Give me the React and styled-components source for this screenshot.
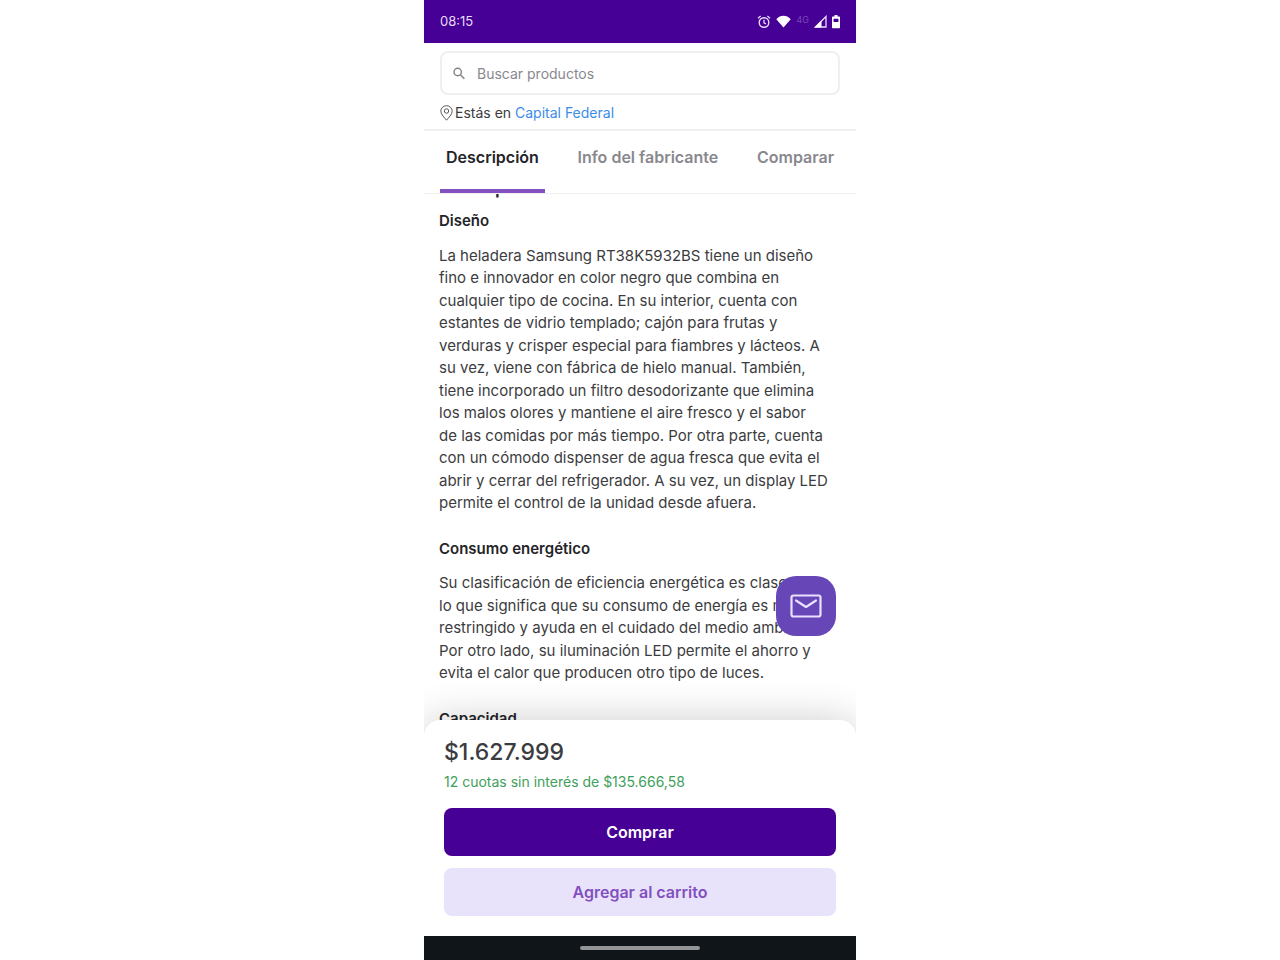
import React, { useState } from "react";
import styled, { createGlobalStyle } from "styled-components";

const colors = {
  brand: "#460096",
  accent: "#8250c0",
  fab: "#6747b8",
  lilac: "#e8e3fb",
  black: "#242428",
  text: "#3c3c40",
  gray: "#88888e",
  line: "#efeff0",
  link: "#3d8bea",
  green: "#3fa05c",
  navBar: "#0f1518",
};

const GlobalStyle = createGlobalStyle`
  * {
    box-sizing: border-box;
  }
  body {
    margin: 0;
    background-color: white;
    font-family: Inter, "Liberation Sans", sans-serif;
    color: ${colors.text};
  }
  h1, h2, p {
    margin: 0;
  }
  button, input {
    font-family: inherit;
  }
`;

const Screen = styled.div`
  position: relative;
  display: flex;
  flex-direction: column;
  width: 100%;
  max-width: 432px;
  height: 100vh;
  margin: 0 auto;
  overflow: hidden;
`;

const StatusBar = styled.div`
  display: flex;
  flex: none;
  align-items: center;
  justify-content: space-between;
  padding: 12px 16px;
  background-color: ${colors.brand};
  color: #e6dcf5;
  font-size: 13px;
  line-height: 19px;
`;

const StatusIcons = styled.div`
  display: flex;
  align-items: center;
  gap: 5px;
  svg {
    display: block;
  }
`;

const Network = styled.span`
  align-self: flex-start;
  color: #7a48b8;
  font-size: 9px;
  line-height: 10px;
`;

const Header = styled.header`
  flex: none;
  padding: 8px 16px 6px;
  border-bottom: 2px solid ${colors.line};
`;

const SearchBox = styled.label`
  display: flex;
  align-items: center;
  gap: 12px;
  height: 44px;
  padding: 0 11px;
  border: 2px solid ${colors.line};
  border-radius: 8px;
  input {
    flex: 1;
    min-width: 0;
    padding: 0;
    border: 0;
    outline: 0;
    background: none;
    color: ${colors.text};
    font-size: 14px;
  }
  input::placeholder {
    color: ${colors.gray};
    opacity: 1;
  }
`;

const Location = styled.p`
  display: flex;
  align-items: center;
  gap: 2px;
  padding-top: 8px;
  color: ${colors.text};
  font-size: 14px;
  line-height: 20px;
  a {
    color: ${colors.link};
    text-decoration: none;
  }
`;

const Tabs = styled.div`
  display: flex;
  flex: none;
  justify-content: space-between;
  padding: 0 16px;
  border-bottom: 1px solid ${colors.line};
`;

const Tab = styled.button`
  padding: 16px 6px 22px;
  border: 0;
  border-bottom: 4px solid
    ${({ $active }) => ($active ? colors.accent : "transparent")};
  background: none;
  color: ${({ $active }) => ($active ? colors.black : colors.gray)};
  font-size: 16px;
  font-weight: 600;
  line-height: 20px;
  white-space: nowrap;
  cursor: pointer;
`;

const Content = styled.main`
  flex: 1;
  min-height: 0;
  padding: 0 12px 0 15px;
  overflow: hidden;
  font-size: 15px;
  line-height: 1.5;
`;

const Title = styled.h1`
  margin: -20px 0 9px;
  color: ${colors.black};
  font-size: 18px;
  font-weight: 600;
`;

const Section = styled.section`
  margin-bottom: 23px;
  h2 {
    margin-bottom: 12px;
    color: ${colors.black};
    font-size: 15px;
    font-weight: 600;
  }
  p {
    white-space: pre;
  }
`;

const MailButton = styled.button`
  position: absolute;
  right: 20px;
  bottom: 324px;
  display: flex;
  align-items: center;
  justify-content: center;
  width: 60px;
  height: 60px;
  padding: 0;
  border: 0;
  border-radius: 20px;
  background-color: ${colors.fab};
  cursor: pointer;
`;

const Sheet = styled.footer`
  position: relative;
  display: flex;
  flex: none;
  flex-direction: column;
  margin-top: -16px;
  padding: 16px 20px 20px;
  border-radius: 16px 16px 0 0;
  background-color: white;
  box-shadow: 0 0 40px rgba(0, 0, 0, 0.2);
`;

const Price = styled.strong`
  color: ${colors.text};
  font-size: 23px;
  font-weight: 500;
  line-height: 32px;
`;

const Installments = styled.span`
  margin: 4px 0 16px;
  color: ${colors.green};
  font-size: 14px;
  line-height: 20px;
`;

const ActionButton = styled.button`
  height: 48px;
  border: 0;
  border-radius: 8px;
  background-color: ${({ $primary }) =>
    $primary ? colors.brand : colors.lilac};
  color: ${({ $primary }) => ($primary ? "white" : colors.accent)};
  font-size: 16px;
  font-weight: 600;
  cursor: pointer;
  & + & {
    margin-top: 12px;
  }
`;

const NavBar = styled.div`
  position: relative;
  display: flex;
  flex: none;
  align-items: center;
  justify-content: center;
  height: 24px;
  background-color: ${colors.navBar};
  &::after {
    content: "";
    width: 120px;
    height: 4px;
    border-radius: 2px;
    background-color: #929496;
  }
`;

const AlarmIcon = () => (
  <svg width="14" height="14" viewBox="0 0 14 14" fill="none" stroke="#e6dcf5">
    <circle cx="7" cy="7.5" r="4.8" strokeWidth="1.4" />
    <path d="M7 4.8v3l2 1.2M1 3.2l2.6-2.2M13 3.2l-2.6-2.2" strokeWidth="1.3" />
  </svg>
);

const WifiIcon = () => (
  <svg width="15" height="13" viewBox="0 0 15 13" fill="white">
    <path d="M7.5 12.5L.3 4.2C2.300 1.700 4.900.7 7.500.7s5.200 1 7.200 3.500z" />
  </svg>
);

const SignalIcon = () => (
  <svg width="13" height="13" viewBox="0 0 13 13">
    <path d="M1.5 12L12 1.5V12z" fill="none" stroke="#e6dcf5" strokeWidth="1.3" />
    <path d="M.5 12.6L7.5 5.6v7z" fill="white" />
  </svg>
);

const BatteryIcon = () => (
  <svg width="8" height="14" viewBox="0 0 8 14" fill="white">
    <path
      d="M2.5 0h3v1.5H7.2q.8 0 .8.8V12.500q0 .8-.8.8H.8q-.8 0-.8-.8V2.300q0-.8.8-.8h1.700zM1.600 3.800V7h4.800V3.800z"
      fillRule="evenodd"
    />
  </svg>
);

const SearchIcon = () => (
  <svg width="12" height="13" viewBox="0 0 12 13" fill="none" stroke="#808086" strokeWidth="1.4">
    <circle cx="4.7" cy="5" r="3.7" />
    <path d="M7.4 7.8l4 4" />
  </svg>
);

const PinIcon = () => (
  <svg width="13" height="16" viewBox="0 0 13 16" fill="none" stroke="#58585e">
    <path d="M6.500 15.200C4.500 12.500.8 9.600.8 6.200a5.700 5.500 0 0 1 11.400 0c0 3.400-3.700 6.300-5.700 9z" />
    <circle cx="6.5" cy="6" r="2.2" />
  </svg>
);

const MailIcon = () => (
  <svg
    width="32"
    height="24"
    viewBox="0 0 32 24"
    fill="none"
    stroke="#eae0ff"
    strokeWidth="2.2"
    strokeLinejoin="round"
    strokeLinecap="round"
  >
    <rect x="1.5" y="1.5" width="29" height="21" rx="2" />
    <path d="M6 6.5l10 6.5L26 6.5" />
  </svg>
);

const tabs = ["Descripción", "Info del fabricante", "Comparar"];

const sections = [
  {
    title: "Diseño",
    lines: [
      "La heladera Samsung RT38K5932BS tiene un diseño",
      "fino e innovador en color negro que combina en",
      "cualquier tipo de cocina. En su interior, cuenta con",
      "estantes de vidrio templado; cajón para frutas y",
      "verduras y crisper especial para fiambres y lácteos. A",
      "su vez, viene con fábrica de hielo manual. También,",
      "tiene incorporado un filtro desodorizante que elimina",
      "los malos olores y mantiene el aire fresco y el sabor",
      "de las comidas por más tiempo. Por otra parte, cuenta",
      "con un cómodo dispenser de agua fresca que evita el",
      "abrir y cerrar del refrigerador. A su vez, un display LED",
      "permite el control de la unidad desde afuera.",
    ],
  },
  {
    title: "Consumo energético",
    lines: [
      "Su clasificación de eficiencia energética es clase A,",
      "lo que significa que su consumo de energía es más",
      "restringido y ayuda en el cuidado del medio ambiente.",
      "Por otro lado, su iluminación LED permite el ahorro y",
      "evita el calor que producen otro tipo de luces.",
    ],
  },
  { title: "Capacidad", lines: [] },
];

const App = () => {
  const [activeTab, setActiveTab] = useState(tabs[0]);

  return (
    <>
      <GlobalStyle />
      <Screen>
        <StatusBar>
          <span>08:15</span>
          <StatusIcons>
            <AlarmIcon />
            <WifiIcon />
            <Network>4G</Network>
            <SignalIcon />
            <BatteryIcon />
          </StatusIcons>
        </StatusBar>
        <Header>
          <SearchBox>
            <SearchIcon />
            <input
              type="search"
              placeholder="Buscar productos"
              aria-label="Buscar productos"
            />
          </SearchBox>
          <Location>
            <PinIcon />
            <span>
              Estás en <a href="#ubicacion">Capital Federal</a>
            </span>
          </Location>
        </Header>
        <Tabs role="tablist">
          {tabs.map((tab) => (
            <Tab
              key={tab}
              role="tab"
              aria-selected={tab === activeTab}
              $active={tab === activeTab}
              onClick={() => setActiveTab(tab)}
            >
              {tab}
            </Tab>
          ))}
        </Tabs>
        <Content>
          <Title>Descripción</Title>
          {sections.map(({ title, lines }) => (
            <Section key={title}>
              <h2>{title}</h2>
              <p>{lines.join("\n")}</p>
            </Section>
          ))}
        </Content>
        <MailButton aria-label="Enviar mensaje">
          <MailIcon />
        </MailButton>
        <Sheet>
          <Price>$1.627.999</Price>
          <Installments>12 cuotas sin interés de $135.666,58</Installments>
          <ActionButton $primary>Comprar</ActionButton>
          <ActionButton>Agregar al carrito</ActionButton>
        </Sheet>
        <NavBar />
      </Screen>
    </>
  );
};

export default App;
